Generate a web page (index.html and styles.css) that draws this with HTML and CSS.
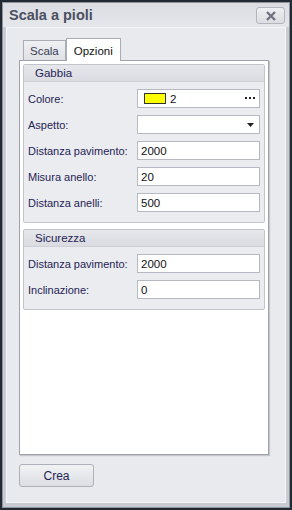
FILE: index.html
```html
<!DOCTYPE html>
<html lang="it">
<head>
    <meta charset="UTF-8">
    <title>Scala a pioli</title>
    <link rel="stylesheet" href="styles.css">
</head>
<body>
    <div class="window">
        <div class="titlebar">
            <span class="title">Scala a pioli</span>
            <button class="close">
                <svg width="12" height="10" viewBox="0 0 12 10"><path d="M2 1 L10 9 M10 1 L2 9" stroke="#6f7480" stroke-width="2.4"/></svg>
            </button>
        </div>
        <div class="client">
            <div class="tabs">
                <div class="tab">Scala</div>
                <div class="tab active">Opzioni</div>
            </div>
            <div class="page">
                <div class="group">
                    <div class="group-head">Gabbia</div>
                    <div class="group-body">
                        <div class="row">
                            <label>Colore:</label>
                            <div class="field color">
                                <span class="swatch"></span>
                                <span class="num">2</span>
                                <span class="dots">
                                    <svg width="11" height="3" viewBox="0 0 11 3"><rect x="0" y="0" width="2" height="2" fill="#222"/><rect x="4" y="0" width="2" height="2" fill="#222"/><rect x="8" y="0" width="2" height="2" fill="#222"/></svg>
                                </span>
                            </div>
                        </div>
                        <div class="row">
                            <label>Aspetto:</label>
                            <div class="field combo">
                                <svg width="7" height="4" viewBox="0 0 7 4"><path d="M0 0 H7 L3.5 4 Z" fill="#222"/></svg>
                            </div>
                        </div>
                        <div class="row">
                            <label>Distanza pavimento:</label>
                            <div class="field">2000</div>
                        </div>
                        <div class="row">
                            <label>Misura anello:</label>
                            <div class="field">20</div>
                        </div>
                        <div class="row">
                            <label>Distanza anelli:</label>
                            <div class="field">500</div>
                        </div>
                    </div>
                </div>
                <div class="group">
                    <div class="group-head">Sicurezza</div>
                    <div class="group-body">
                        <div class="row">
                            <label>Distanza pavimento:</label>
                            <div class="field">2000</div>
                        </div>
                        <div class="row">
                            <label>Inclinazione:</label>
                            <div class="field">0</div>
                        </div>
                    </div>
                </div>
            </div>
            <button class="btn">Crea</button>
        </div>
    </div>
</body>
</html>
```

FILE: styles.css
```css
body {
    margin: 0;
    background: #232a34;
    font-family: "Liberation Sans", Arial, sans-serif;
    font-size: 11px;
    color: #1f2355;
}

.window {
    margin: 2px;
    width: 286px;
    height: 504px;
    border: 1px solid #8f939c;
    background: #c9cbd2;
    display: flex;
    flex-direction: column;
}

.titlebar {
    height: 24px;
    display: flex;
    align-items: center;
    justify-content: space-between;
    padding: 0 4px 0 6px;
    background: linear-gradient(#dcdde3, #e6e7eb);
}

.title {
    font-weight: bold;
    font-size: 14.5px;
    color: #4a5060;
}

.close {
    width: 29px;
    height: 17px;
    margin-top: 1px;
    border: 1px solid #b2b5bd;
    border-radius: 3px;
    background: linear-gradient(#eeeff2, #dcdde2);
    display: flex;
    align-items: center;
    justify-content: center;
    padding: 0;
}

.client {
    flex: 1;
    margin: 0 3px 4px 3px;
    border: 1px solid #f4f5f7;
    background: #e9eaee;
    padding: 9px 16px 0 12px;
}

.tabs {
    display: flex;
    align-items: flex-end;
    padding-left: 4px;
    height: 23px;
}

.tab {
    height: 19px;
    padding: 0 6px;
    border: 1px solid #a9acb5;
    border-bottom: none;
    background: linear-gradient(#f0f1f3, #dfe0e5);
    line-height: 20px;
    font-size: 11.5px;
    color: #3a3e55;
}

.tab.active {
    height: 22px;
    line-height: 24px;
    padding: 0 7px;
    background: #fff;
    margin-bottom: -1px;
    position: relative;
    color: #111;
}

.page {
    height: 387px;
    border: 1px solid #9fa2ab;
    background: #fff;
    padding: 3px;
    box-shadow: 1px 1px 1px rgba(0, 0, 0, 0.15);
    display: flex;
    flex-direction: column;
    gap: 6px;
}

.group {
    border: 1px solid #c2c4cb;
    border-radius: 2px;
    background: #ebecf0;
}

.group-head {
    height: 16px;
    line-height: 17px;
    padding-left: 11px;
    background: linear-gradient(#e6e7eb, #dbdce1);
    border-bottom: 1px solid #cfd1d7;
    font-size: 11.5px;
    color: #1f2355;
}

.group-body {
    padding: 7px 4px 10px 4px;
    display: flex;
    flex-direction: column;
    gap: 7px;
}

.row {
    display: flex;
    align-items: center;
    justify-content: space-between;
    height: 19px;
    font-size: 11.5px;
}

.row label {
    color: #1f2355;
    font-size: 11px;
}

.field {
    height: 17px;
    border: 1px solid #b6b9c1;
    background: #fff;
    line-height: 18px;
    padding-left: 3px;
    box-sizing: content-box;
    color: #111;
    width: 118px;
}

.field.color {
    display: flex;
    align-items: center;
}

.swatch {
    width: 20px;
    height: 9px;
    border: 1px solid #333;
    background: #ffff00;
    margin-left: 3px;
}

.num {
    margin-left: 4px;
}

.dots {
    margin-left: auto;
    margin-right: 3px;
    display: flex;
}

.field.combo {
    display: flex;
    align-items: center;
    justify-content: flex-end;
    padding-right: 5px;
    width: 113px;
}

.btn {
    margin-top: 9px;
    width: 75px;
    height: 23px;
    border: 1px solid #adb0b8;
    border-radius: 3px;
    background: linear-gradient(#f1f2f4, #dddee3);
    font-family: "Liberation Sans", Arial, sans-serif;
    font-size: 12px;
    color: #1f2355;
}
```
